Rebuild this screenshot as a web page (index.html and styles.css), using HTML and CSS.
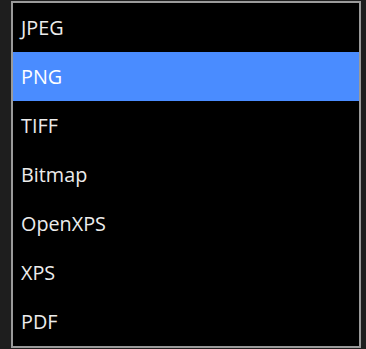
FILE: index.html
```html
<!DOCTYPE html>
<html lang="en">
<head>
    <meta charset="UTF-8">
    <meta name="viewport" content="width=device-width, initial-scale=1.0">
    <title>Save as type</title>
    <link rel="stylesheet" href="styles.css">
</head>
<body>
    <div class="page">
        <ul class="type-list">
            <li>JPEG</li>
            <li class="active">PNG</li>
            <li>TIFF</li>
            <li>Bitmap</li>
            <li>OpenXPS</li>
            <li>XPS</li>
            <li>PDF</li>
        </ul>
    </div>
</body>
</html>
```

FILE: styles.css
```css
*{
    margin: 0;
    padding: 0;
    box-sizing: border-box;
}

html,body{
    height: 100%;
    background-color: #1e1e1e;
    overflow: hidden;
}

.page{
    padding: 1px 0 0 11px;
}

li{
    list-style-type: none;
}

.type-list{
    width: 350px;
    height: 347px;
    border: 2px solid #9a9a9a;
    background-color: #000;
}

.type-list li{
    height: 49px;
    line-height: 49px;
    padding-left: 8px;
    font-family: "Open Sans", "Noto Sans", sans-serif;
    font-size: 19.8px;
    color: #ececec;
}

.type-list .active{
    background-color: #4a8cff;
    color: #fff;
}
```
